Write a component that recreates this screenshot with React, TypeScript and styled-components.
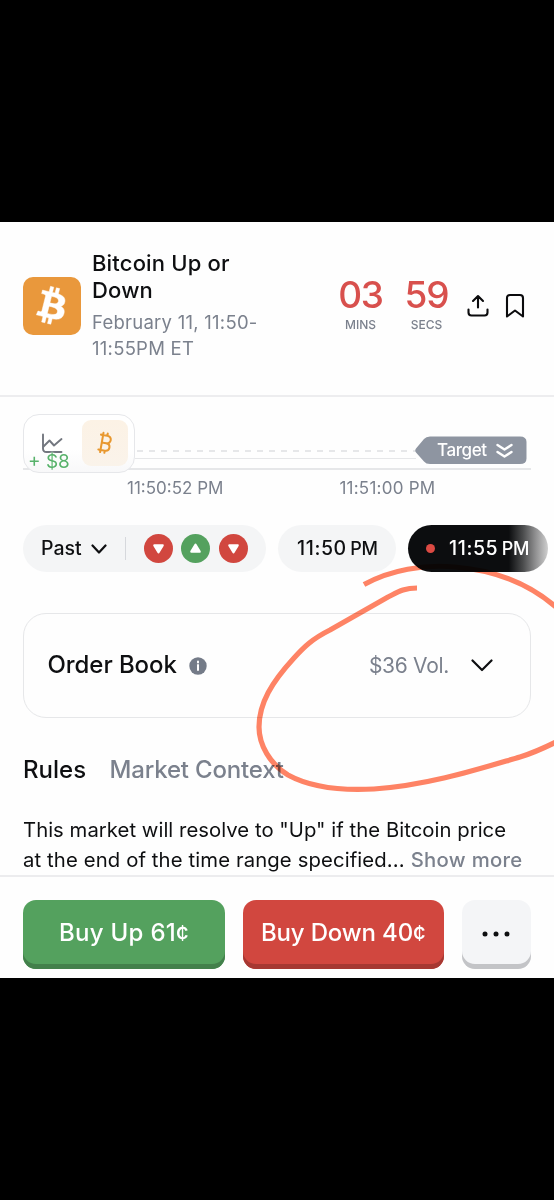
import React from "react";
import styled, { createGlobalStyle } from "styled-components";
import { Bitcoin } from "lucide-react";

const Global = createGlobalStyle`
  * { box-sizing: border-box; }
  html, body { margin: 0; background: #000; }
  body { font-family: Inter, "Liberation Sans", sans-serif; color: #0e0f11; overflow: hidden; }
`;

const Screen = styled.div`
  width: 554px;
  height: 1200px;
  padding-top: 222px;
  background: #000;
`;

const Panel = styled.main`
  position: relative;
  height: 756px;
  background: #fefefe;
  overflow: hidden;
  isolation: isolate;
`;

const Label = styled.span<{ $size: number; $gap?: number; $weight?: number; $color?: string; $line?: number }>`
  display: block;
  white-space: nowrap;
  font-size: ${(p) => p.$size}px;
  letter-spacing: ${(p) => p.$gap ?? 0}px;
  font-weight: ${(p) => p.$weight ?? 400};
  color: ${(p) => p.$color ?? "inherit"};
  line-height: ${(p) => (p.$line ? `${p.$line}px` : "1.2")};
`;

const Header = styled.header`
  height: 175px;
  padding: 28px 29px 0 23px;
  display: flex;
  align-items: flex-start;
  border-bottom: 2px solid #ededef;
`;

const CoinTile = styled.div`
  width: 58px;
  height: 58px;
  margin-top: 27px;
  border-radius: 10px;
  background: #e9983c;
  flex: none;
`;

const Titles = styled.div`
  width: 258px;
  padding-left: 11px;
  flex: none;
`;

const Subtitle = styled.div`
  margin-top: 5px;
`;

const Counter = styled.div`
  width: 43px;
  margin: 22px 23px 0 0;
  display: flex;
  flex-direction: column;
  align-items: center;
  flex: none;
`;

const HeaderIcons = styled.div`
  display: flex;
  gap: 15px;
  margin: 43px 0 0 -5px;
`;

const ChartArea = styled.section`
  position: relative;
  height: 73px;
  margin: 0 23px;
  border-bottom: 2px solid #e6e7e9;
  display: flex;
  align-items: flex-start;
`;

const Toggle = styled.div`
  position: relative;
  z-index: 1;
  width: 112px;
  height: 59px;
  margin-top: 17px;
  border: 1.5px solid #e6e7ea;
  border-radius: 16px;
  background: linear-gradient(#ffffff 60%, #f8f8f9);
  padding: 5px 6px 5px 5px;
  display: flex;
  justify-content: space-between;
  flex: none;
`;

const ToggleCell = styled.div<{ $active?: boolean }>`
  width: 46px;
  height: 46px;
  border-radius: 9px;
  background: ${(p) => (p.$active ? "linear-gradient(#fcf2e5, #faf3ea)" : "transparent")};
  display: flex;
  align-items: center;
  justify-content: center;
`;

const Gain = styled.div`
  position: absolute;
  left: 4px;
  top: 36px;
  text-shadow: 0 0 2px #fff, 0 0 2px #fff;
`;

const TargetLine = styled.div`
  flex: 1;
  height: 9px;
  margin-top: 53px;
  border-bottom: 1px solid #e6e7e9;
`;

const Dashes = styled.svg`
  display: block;
`;

const Target = styled.div`
  position: relative;
  width: 112px;
  height: 29px;
  margin: 39px 4.5px 0 -1px;
  flex: none;
`;

const TargetText = styled.div`
  position: absolute;
  left: 22px;
  top: 1.5px;
`;

const Times = styled.div`
  display: flex;
  gap: 116px;
  padding: 8px 0 0 127px;
  height: 55px;
`;

const Pills = styled.div`
  display: flex;
  padding-left: 23px;
  gap: 12px;
  height: 47px;
`;

const Pill = styled.div<{ $width: number; $dark?: boolean; $inset: number }>`
  width: ${(p) => p.$width}px;
  height: 47px;
  flex: none;
  border-radius: 24px;
  padding-left: ${(p) => p.$inset}px;
  display: flex;
  align-items: center;
  color: ${(p) => (p.$dark ? "#fff" : "#0e0f11")};
  background: ${(p) => (p.$dark ? "linear-gradient(90deg, #0c0d0f 72%, #4a4b4c 82%, #8f8f90 91%, #cfcfcf 100%)" : "#f4f5f6")};
`;

const Meridiem = styled.span`
  margin-left: 3.5px;
  font-size: 18px;
  font-weight: 500;
  letter-spacing: -0.2px;
`;

const Divider = styled.i`
  width: 1px;
  height: 23px;
  margin: 0 17.5px 0 18.5px;
  background: #d6d8dc;
`;

const Results = styled.div`
  display: flex;
  gap: 8.5px;
`;

const LiveDot = styled.i`
  width: 9px;
  height: 9px;
  border-radius: 50%;
  background: #dc4a43;
  margin-right: 14px;
`;

const OrderBook = styled.section`
  height: 105px;
  margin: 41px 23px 0;
  border: 1px solid #e6e7e9;
  border-radius: 23px;
  padding: 0 37px 0 23.5px;
  display: flex;
  align-items: center;
`;

const InfoDot = styled.svg`
  margin: 0 auto 0 12px;
`;

const ChevronIcon = styled.svg<{ $space: number }>`
  margin-left: ${(p) => p.$space}px;
  flex: none;
`;

const Tabs = styled.nav`
  display: flex;
  gap: 23.5px;
  padding: 37px 0 0 23px;
`;

const Rules = styled.p`
  margin: 30px 0 0 23px;
  height: 60px;
`;

const RuleLine = styled.span`
  display: flex;
  gap: 6px;
`;

const Actions = styled.footer`
  position: relative;
  border-top: 2px solid #ececee;
  display: flex;
  padding: 23px 23px 0;
  gap: 17.5px;
  background: #fefefe;
`;

const Button = styled.button<{ $width: number; $bg: string; $edge: string }>`
  font-family: inherit;
  width: ${(p) => p.$width}px;
  height: 69px;
  flex: none;
  border: 0;
  border-radius: 13px;
  padding: 0 0 2px;
  background: ${(p) => p.$bg};
  box-shadow: inset 0 -5px 0 ${(p) => p.$edge};
  color: #fff;
  display: flex;
  align-items: center;
  justify-content: center;
`;

const Cent = styled.span`
  font-size: 22px;
`;

const Scribble = styled.svg`
  position: absolute;
  left: 0;
  top: 0;
  z-index: 3;
  mix-blend-mode: multiply;
  pointer-events: none;
`;

const Chevron = ({ w, h, s, space }: { w: number; h: number; s: number; space: number }) => (
  <ChevronIcon $space={space} width={w + 3} height={h + 3} viewBox={`-1.5 -1.5 ${w + 3} ${h + 3}`} fill="none" stroke="#0e0f11" strokeWidth={s} strokeLinecap="round" strokeLinejoin="round">
    <path d={`M0 0L${w / 2} ${h}L${w} 0`} />
  </ChevronIcon>
);

const Result = ({ up }: { up?: boolean }) => (
  <svg width="29" height="29" viewBox="0 0 29 29">
    <circle cx="14.5" cy="14.5" r="14.5" fill={up ? "#54a15e" : "#d1473f"} />
    <path
      d={up ? "M14.5 10.8L18.6 17.6H10.4Z" : "M14.5 18.2L18.6 11.4H10.4Z"}
      fill="#fff" stroke="#fff" strokeWidth="2.4" strokeLinejoin="round"
    />
  </svg>
);

const gray = "#7b818d";

export default function App() {
  return (
    <Screen>
      <Global />
      <Panel>
        <Header>
          <CoinTile>
            <svg width="58" height="58" viewBox="0 0 58 58">
              <path
                transform="translate(-1.200 -1.100) scale(0.935)"
                fill="#fff"
                stroke="#fff"
                strokeWidth="0.5"
                d="m46.103,27.444c0.637-4.258-2.605-6.547-7.038-8.074l1.438-5.768-3.511-0.875-1.4,5.616c-0.923-0.230-1.871-0.447-2.813-0.662l1.410-5.653-3.509-0.875-1.439,5.766c-0.764-0.174-1.514-0.346-2.242-0.527l0.004-0.018-4.842-1.209-0.934,3.750s2.605,0.597,2.550,0.634c1.422,0.355,1.679,1.296,1.636,2.042l-1.638,6.571c0.098,0.025,0.225,0.061,0.365,0.117-0.117-0.029-0.242-0.061-0.371-0.092l-2.296,9.205c-0.174,0.432-0.615,1.080-1.609,0.834,0.035,0.051-2.552-0.637-2.552-0.637l-1.743,4.019,4.569,1.139c0.850,0.213,1.683,0.436,2.503,0.646l-1.453,5.834,3.507,0.875,1.439-5.772c0.958,0.260,1.888,0.500,2.798,0.726l-1.434,5.745,3.511,0.875,1.453-5.823c5.987,1.133,10.489,0.676,12.384-4.739,1.527-4.360-0.076-6.875-3.226-8.515,2.294-0.529,4.022-2.038,4.483-5.155zm-8.022,11.249c-1.085,4.360-8.426,2.003-10.806,1.412l1.928-7.729c2.380,0.594,10.012,1.770,8.878,6.317zm1.086-11.312c-0.990,3.966-7.100,1.951-9.082,1.457l1.748-7.010c1.982,0.494,8.365,1.416,7.334,5.553z"
              />
            </svg>
          </CoinTile>
          <Titles>
            <Label $size={22} $weight={500} $line={27} $gap={0.17}>Bitcoin Up or</Label>
            <Label $size={22} $weight={500} $line={27} $gap={0.17}>Down</Label>
            <Subtitle>
              <Label $size={18.5} $line={26} $gap={0.25} $color={gray}>February 11, 11:50-</Label>
              <Label $size={18.5} $line={26} $gap={0.25} $color={gray}>11:55PM ET</Label>
            </Subtitle>
          </Titles>
          <Counter>
            <Label $size={37} $weight={500} $line={45} $gap={-1.2} $color="#d8504d">03</Label>
            <Label $size={12} $weight={500} $line={16} $color={gray}>MINS</Label>
          </Counter>
          <Counter>
            <Label $size={37} $weight={500} $line={45} $gap={-1.2} $color="#d8504d">59</Label>
            <Label $size={12} $weight={500} $line={16} $color={gray}>SECS</Label>
          </Counter>
          <HeaderIcons>
            <svg width="24" height="26" viewBox="0 0 24 26" fill="none" stroke="#0b0b0d" strokeWidth="2.1" strokeLinecap="round" strokeLinejoin="round">
              <path d="M12 14.5V3.5M7 8L12 3L17 8M2.5 16.5V19.5Q2.5 22.5 5.5 22.5H18.5Q21.5 22.5 21.5 19.5V16.5" />
            </svg>
            <svg width="20" height="26" viewBox="0 0 20 26" fill="none" stroke="#0b0b0d" strokeWidth="2.1" strokeLinejoin="round">
              <path d="M2 23.5V5Q2 2 5 2H15Q18 2 18 5V23.5L10 17.5Z" />
            </svg>
          </HeaderIcons>
        </Header>

        <ChartArea>
          <Toggle>
            <ToggleCell>
              <svg width="22" height="22" viewBox="-0.500 -0.500 22 22" fill="none" stroke="#73777f" strokeWidth="1.9" strokeLinecap="round" strokeLinejoin="round">
                <path d="M1.5 2V16Q1.5 19.5 5 19.5H20M2 14L8 8L12.5 13L20 6.5" />
              </svg>
            </ToggleCell>
            <ToggleCell $active>
              <Bitcoin size={26} color="#e8982f" strokeWidth={1.9} />
            </ToggleCell>
            <Gain><Label $size={19} $line={22} $color="#58b26b">+ $8</Label></Gain>
          </Toggle>
          <TargetLine>
            <Dashes width="281" height="2" viewBox="0 0 281 2">
              <path d="M2 1H281" stroke="#dedfe2" strokeWidth="1.5" strokeDasharray="6 6" />
            </Dashes>
          </TargetLine>
          <Target>
            <svg width="112" height="29" viewBox="0 0 112 29" fill="none">
              <path d="M9 3Q11 0.500 15 0.500H105Q111.500 0.500 111.500 6V22.500Q111.500 28 105 28H15Q11 28 9 25.500L1 16.500Q-0.500 14.500 1 12.500Z" fill="#8e95a1" />
              <path d="M82.500 9L89.500 13.500L96.500 9M82.500 16L89.500 20.500L96.500 16" stroke="#fff" strokeWidth="2.4" strokeLinecap="round" strokeLinejoin="round" />
            </svg>
            <TargetText><Label $size={17} $weight={500} $line={24} $gap={-0.4} $color="#fff">Target</Label></TargetText>
          </Target>
        </ChartArea>

        <Times>
          <Label $size={17} $line={20} $color={gray}>11:50:52 PM</Label>
          <Label $size={17} $line={20} $gap={0.25} $color={gray}>11:51:00 PM</Label>
        </Times>

        <Pills>
          <Pill $width={243} $inset={18}>
            <Label $size={19.5} $weight={500}>Past</Label>
            <Chevron w={13} h={7} s={2.2} space={9} />
            <Divider />
            <Results><Result /><Result up /><Result /></Results>
          </Pill>
          <Pill $width={118} $inset={19}>
            <Label $size={19.5} $weight={500} $gap={0.6}>11:50</Label>
            <Meridiem>PM</Meridiem>
          </Pill>
          <Pill $width={140} $inset={18} $dark>
            <LiveDot />
            <Label $size={19.5} $weight={500} $gap={0.6}>11:55</Label>
            <Meridiem>PM</Meridiem>
          </Pill>
        </Pills>

        <OrderBook>
          <Label $size={24} $weight={500} $gap={-0.07}>Order Book</Label>
          <InfoDot width="18" height="18" viewBox="0 0 18 18">
            <circle cx="9" cy="9" r="8.700" fill="#747b88" />
            <path d="M9 8V13M9 4.600V5.600" stroke="#fff" strokeWidth="2" strokeLinecap="round" />
          </InfoDot>
          <Label $size={21} $gap={-0.3} $color={gray}>$36 Vol.</Label>
          <Chevron w={19} h={9.5} s={2.2} space={22} />
        </OrderBook>

        <Tabs>
          <Label $size={24} $weight={500} $line={30}>Rules</Label>
          <Label $size={24} $weight={500} $line={30} $gap={-0.18} $color={gray}>Market Context</Label>
        </Tabs>

        <Rules>
          <Label $size={20.3} $line={29.5} $gap={0.04}>This market will resolve to "Up" if the Bitcoin price</Label>
          <RuleLine>
            <Label $size={20.3} $line={29.5} $gap={0.12}>at the end of the time range specified...</Label>
            <Label $size={20.3} $line={29.5} $gap={0.3} $weight={500} $color={gray}>Show more</Label>
          </RuleLine>
        </Rules>

        <Actions>
          <Button $width={202} $bg="#54a15e" $edge="#43804b"><Label $size={24} $weight={500} $gap={0.3}>Buy Up 61<Cent>¢</Cent></Label></Button>
          <Button $width={201.5} $bg="#d1473f" $edge="#a63832"><Label $size={24} $weight={500} $gap={-0.15}>Buy Down 40<Cent>¢</Cent></Label></Button>
          <Button $width={69.5} $bg="#f4f5f7" $edge="#c3c4c7">
            <svg width="30" height="6" viewBox="0 0 30 6" fill="#0e0f11">
              <circle cx="4" cy="3" r="2.500" /><circle cx="15" cy="3" r="2.500" /><circle cx="26" cy="3" r="2.500" />
            </svg>
          </Button>
        </Actions>

        <Scribble width="554" height="756" viewBox="0 222 554 756" fill="none" stroke="#ff8465" strokeWidth="5.2" strokeLinejoin="round">
          <path d="M364 584.500C390 570 424 564 455 567C493 570 528 583 556 607" />
          <path d="M417 588C404 588 398 592 388 597L330 630C312 639 304 647 294 658C272 682 259 703 259 727C259 745 270 764 288 775C310 787 338 791 374 789C430 785 482 768 520 757C536 752 546 747 556 742" />
        </Scribble>
      </Panel>
    </Screen>
  );
}
